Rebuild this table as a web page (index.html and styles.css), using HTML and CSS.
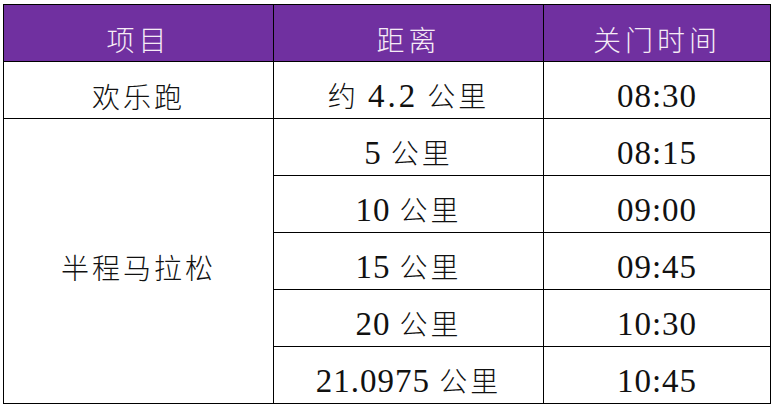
FILE: index.html
```html
<!DOCTYPE html>
<html lang="zh-CN">
<head>
<meta charset="utf-8">
<link rel="stylesheet" href="styles.css">
</head>
<body>
<table class="race">
  <colgroup>
    <col class="c1"><col class="c2"><col class="c3">
  </colgroup>
  <thead>
    <tr><th>项目</th><th>距离</th><th>关门时间</th></tr>
  </thead>
  <tbody>
    <tr><td>欢乐跑</td><td>约 <span class="num wide">4.2</span> 公里</td><td><span class="num">08:30</span></td></tr>
    <tr><td rowspan="5">半程马拉松</td><td><span class="num">5</span> 公里</td><td><span class="num">08:15</span></td></tr>
    <tr><td><span class="num">10</span> 公里</td><td><span class="num">09:00</span></td></tr>
    <tr><td><span class="num">15</span> 公里</td><td><span class="num">09:45</span></td></tr>
    <tr><td><span class="num">20</span> 公里</td><td><span class="num">10:30</span></td></tr>
    <tr><td><span class="num">21.0975</span> 公里</td><td><span class="num">10:45</span></td></tr>
  </tbody>
</table>
</body>
</html>
```
FILE: styles.css
```css
html, body {
  margin: 0;
  padding: 0;
  background: #fff;
}
body {
  padding: 4px 0 0 3px;
}
.race {
  border-collapse: collapse;
  table-layout: fixed;
  width: 767px;
  font-family: "Noto Sans CJK SC", sans-serif;
  font-weight: 300;
  font-size: 28px;
  color: #111;
}
.c1 { width: 270px; }
.c2 { width: 270px; }
.c3 { width: 227px; }
.race th, .race td {
  border: 1.5px solid #000;
  height: 57px;
  box-sizing: border-box;
  padding: 12px 0 0 0;
  text-align: center;
  vertical-align: middle;
  font-weight: 300;
  letter-spacing: 3px;
  line-height: 1;
}
.race th {
  background: #7030a0;
  color: #f6ecf6;
  letter-spacing: 4px;
}
.num {
  font-family: "Liberation Serif", serif;
  font-weight: normal;
  font-size: 33px;
  letter-spacing: 1px;
}
.num.wide {
  letter-spacing: 3px;
}
```
